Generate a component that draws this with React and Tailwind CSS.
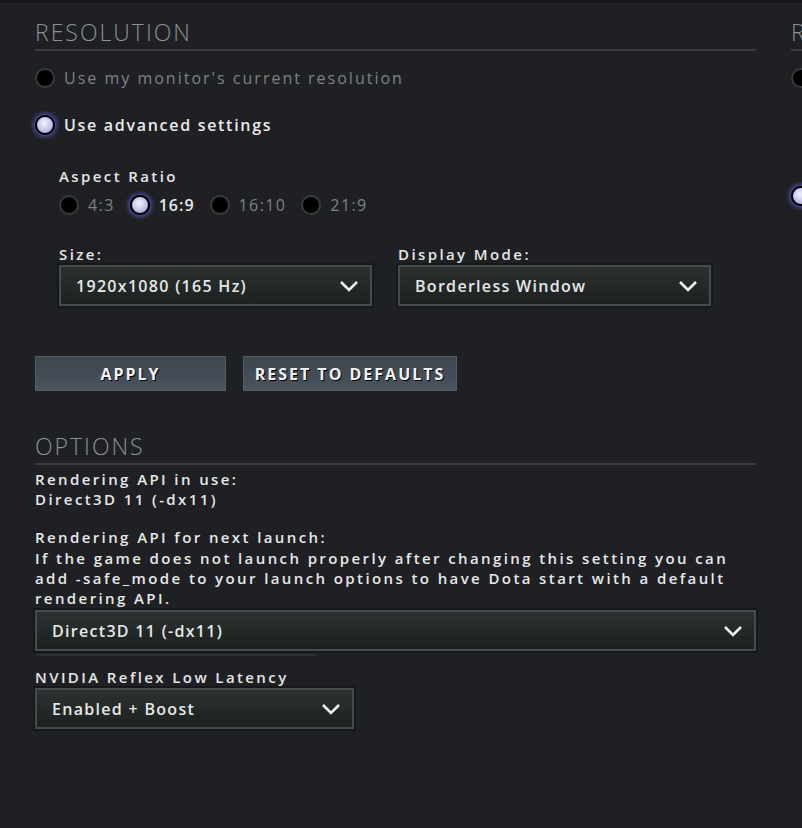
import React from 'react'

const FONT = { fontFamily: '"Open Sans", "Noto Sans", "Liberation Sans", sans-serif' }

function Radio({ checked }) {
  return checked ? (
    <span className="inline-block w-[20px] h-[20px] shrink-0 rounded-full border-2 border-black bg-[radial-gradient(circle_at_45%_40%,#f4f5ff_0%,#c9ccec_45%,#8a8fc2_100%)] shadow-[0_0_4px_2px_#4f4aa0]" />
  ) : (
    <span className="inline-block w-[20px] h-[20px] shrink-0 rounded-full border-2 border-[#363c3c] bg-black" />
  )
}

function RadioRow({ checked, label, small, className = '' }) {
  return (
    <div className={`flex items-center gap-[9px] ${className}`}>
      <Radio checked={checked} />
      <span
        className={`text-[16px] leading-none ${
          checked
            ? `text-[#e8eaea] font-semibold ${small ? 'tracking-[1px]' : 'tracking-[1.7px]'}`
            : `text-[#7c8385] ${small ? 'tracking-[1.4px]' : 'tracking-[2px]'}`
        }`}
      >
        {label}
      </span>
    </div>
  )
}

function Chevron() {
  return (
    <svg width="20" height="12" viewBox="0 0 20 12" className="shrink-0">
      <path d="M2 2 L10 10 L18 2" fill="none" stroke="#f2f2f2" strokeWidth="2.6" />
    </svg>
  )
}

function Dropdown({ value, className = '' }) {
  return (
    <div
      className={`h-[41px] flex items-center justify-between pl-[15px] pr-[11px] border-2 border-[#454c4c] bg-[linear-gradient(#2b3131,#1d2120)] shadow-[0_0_0_2px_#17181b] ${className}`}
    >
      <span className="text-[16px] font-semibold tracking-[1.3px] text-[#e6e8e8] leading-none">{value}</span>
      <Chevron />
    </div>
  )
}

function Heading({ children }) {
  return (
    <div>
      <div className="text-[23px] font-light tracking-[2px] text-[#8b9293] leading-[28px] whitespace-nowrap">
        {children}
      </div>
      <div className="h-[2px] bg-[#3a3c3f] mt-[3px]" />
    </div>
  )
}

function Label({ children, className = '' }) {
  return (
    <div className={`text-[15px] font-semibold tracking-[2.4px] text-[#e4e6e6] leading-[20px] ${className}`}>
      {children}
    </div>
  )
}

function Button({ children, className = '' }) {
  return (
    <button
      className={`h-[35px] border border-[#555d64] bg-[linear-gradient(#3d454d,#4a545d)] text-[16px] font-bold tracking-[2px] text-[#f2f2f2] [text-shadow:1px_1px_0_#000] ${className}`}
    >
      {children}
    </button>
  )
}

export default function App() {
  return (
    <div className="w-[802px] h-[828px] overflow-hidden bg-[#1f2023] border-t-[3px] border-[#151619]" style={FONT}>
      <div className="flex gap-[35px] pl-[35px] pt-[15px]">
        {/* left column */}
        <div className="w-[721px] shrink-0 flex flex-col">
          <Heading>RESOLUTION</Heading>

          <RadioRow className="mt-[17px]" label="Use my monitor's current resolution" />
          <RadioRow className="mt-[27px]" checked label="Use advanced settings" />

          <div className="pl-[24px] mt-[31px]">
            <Label>Aspect Ratio</Label>
            <div className="flex items-center gap-[15px] mt-[9px]">
              <RadioRow small label="4:3" />
              <RadioRow small checked label="16:9" />
              <RadioRow small label="16:10" />
              <RadioRow small label="21:9" />
            </div>

            <div className="flex gap-[26px] mt-[29px]">
              <div className="w-[313px]">
                <Label>Size:</Label>
                <Dropdown className="mt-[1px]" value="1920x1080 (165 Hz)" />
              </div>
              <div className="w-[313px]">
                <Label>Display Mode:</Label>
                <Dropdown className="mt-[1px]" value="Borderless Window" />
              </div>
            </div>
          </div>

          <div className="flex gap-[17px] mt-[50px]">
            <Button className="w-[191px]">APPLY</Button>
            <Button className="w-[214px]">RESET TO DEFAULTS</Button>
          </div>

          <div className="mt-[41px]">
            <Heading>OPTIONS</Heading>
          </div>

          <div className="mt-[4px] text-[15px] font-semibold tracking-[2.4px] leading-[20px] text-[#e6e8e8]">
            <div>Rendering API in use:</div>
            <div>Direct3D 11 (-dx11)</div>
            <div className="mt-[18px]">Rendering API for next launch:</div>
            <div className="mt-[1px]">
              If the game does not launch properly after changing this setting you can add -safe_mode to your launch
              options to have Dota start with a default rendering API.
            </div>
          </div>

          <Dropdown className="mt-[2px] w-[721px]" value="Direct3D 11 (-dx11)" />
          <div className="h-[2px] w-[280px] ml-[2px] mt-[3px] bg-[#2e3134]" />

          <Label className="mt-[11px]">NVIDIA Reflex Low Latency</Label>
          <Dropdown className="mt-[1px] w-[319px]" value="Enabled + Boost" />
        </div>

        {/* right column, cut off at the window edge */}
        <div className="w-[200px] shrink-0 flex flex-col">
          <Heading>RENDERING</Heading>
          <div className="mt-[17px]">
            <Radio />
          </div>
          <div className="mt-[92px]">
            <Radio checked />
          </div>
        </div>
      </div>
    </div>
  )
}
